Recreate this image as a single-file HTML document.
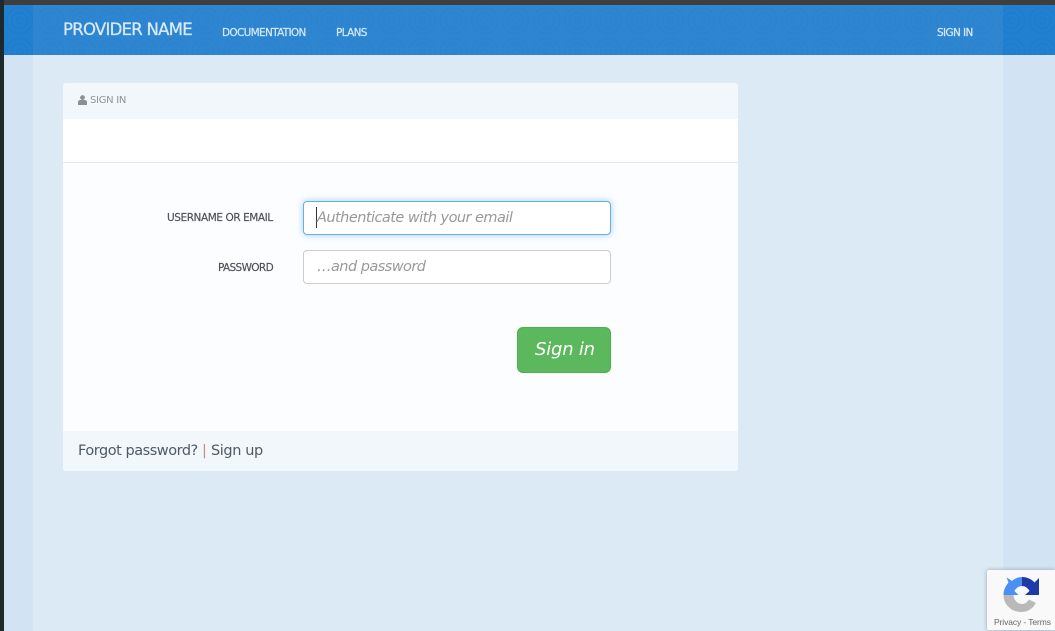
<!DOCTYPE html>
<html><head><meta charset="utf-8"><style>
html,body{margin:0;padding:0;width:1055px;height:631px;overflow:hidden;background:#d2e4f4;font-family:"DejaVu Sans","Liberation Sans",sans-serif}
div,span,svg{position:absolute;white-space:nowrap}
.t{line-height:1}
.n{font-size:10.5px;color:#d8e9f8;letter-spacing:-.68px;-webkit-text-stroke:.2px #d8e9f8;top:28px}
.l{font-size:10.5px;color:#4a4f55;letter-spacing:-.5px;-webkit-text-stroke:.15px #4a4f55}
.ph{font-size:14.5px;font-style:italic;color:#999;letter-spacing:-.54px}
.f{font-size:14.5px;color:#4f5a63;letter-spacing:-.47px;top:444px}
</style></head><body>
<div style="left:0;top:0;width:1055px;height:5px;background:#3e3e3e"></div>
<div style="left:0;top:0;width:4px;height:631px;background:#1c2a2c"></div>
<div style="left:4px;top:5px;width:1051px;height:50px;background:#2180cf"></div>
<div style="left:33px;top:5px;width:970px;height:50px;background:#2e86d1"></div>
<svg style="left:4px;top:5px" width="1051" height="50"><defs><pattern id="p" width="31" height="31" patternUnits="userSpaceOnUse"><g fill="none" stroke="#0a5aa8" stroke-opacity=".06" stroke-width="2"><circle cx="15.5" cy="15.5" r="3"/><circle cx="15.5" cy="15.5" r="8"/><circle cx="15.5" cy="15.5" r="13"/></g></pattern></defs><rect width="1051" height="50" fill="url(#p)"/></svg>
<div style="left:33px;top:55px;width:970px;height:576px;background:#dceaf6"></div>

<div class="t" style="left:63px;top:22px;font-size:16.5px;color:#d8e9f8;letter-spacing:-.73px;-webkit-text-stroke:.3px #d8e9f8">PROVIDER NAME</div>
<div class="t n" style="left:222px">DOCUMENTATION</div>
<div class="t n" style="left:336px">PLANS</div>
<div class="t n" style="left:937px;letter-spacing:-.62px">SIGN IN</div>

<div style="left:63px;top:83px;width:675px;height:388px;background:#fcfdff;border-radius:3px;overflow:hidden">
<div style="left:0;top:0;width:675px;height:36px;background:#f2f7fb"></div>
<div style="left:0;top:36px;width:675px;height:43px;background:#fff;border-bottom:1px solid #e6e8ea"></div>
<div style="left:0;top:348px;width:675px;height:40px;background:#f2f7fb"></div>
</div>
<svg style="left:78px;top:95px" width="9" height="10" viewBox="0 0 9 10"><circle cx="4.5" cy="2.6" r="2.4" fill="#8a8f96"/><path d="M0 10V7.2C0 5.8 1 5 2.2 5h4.6C8 5 9 5.8 9 7.2V10z" fill="#8a8f96"/></svg>
<div class="t" style="left:90px;top:96px;font-size:10px;color:#8f9499;letter-spacing:-.3px">SIGN IN</div>

<div class="t l" style="left:167px;top:213px;letter-spacing:-.43px">USERNAME OR EMAIL</div>
<div class="t l" style="left:218px;top:263px;letter-spacing:-.65px">PASSWORD</div>

<div style="left:303px;top:201px;width:306px;height:32px;background:#fff;border:1px solid #66afe9;border-radius:4px;box-shadow:0 0 7px rgba(102,175,233,.6)"></div>
<div style="left:316px;top:207px;width:1px;height:21px;background:#333"></div>
<div class="t ph" style="left:317px;top:211px">Authenticate with your email</div>
<div style="left:303px;top:250px;width:306px;height:32px;background:#fff;border:1px solid #ccc;border-radius:4px"></div>
<div class="t ph" style="left:317px;top:260px">…and password</div>

<div style="left:517px;top:327px;width:92px;height:44px;background:#5cb85c;border:1px solid #4cae4c;border-radius:6px"></div>
<div class="t" style="left:535px;top:341px;font-size:18px;font-style:italic;color:#fff;letter-spacing:-.22px">Sign in</div>

<div class="t f" style="left:78px">Forgot password?</div>
<div class="t f" style="left:202px;color:#c98a80;letter-spacing:0">|</div>
<div class="t f" style="left:211px;letter-spacing:-.4px">Sign up</div>

<div style="left:987px;top:570px;width:68px;height:60px;background:#f9f9f9;border-radius:2px 0 0 2px;box-shadow:0 0 4px rgba(0,0,0,.3)"></div>
<svg style="left:1003px;top:577px" width="37" height="36" viewBox="0 0 37 36">
<path d="M19 0V9C16 9 13 11 11.500 14L15.500 18H0.500C0.500 13 2.500 9 5.500 5.500L3.500 0.500L9 4C11.500 1.500 15 0 19 0Z" fill="#4a90f2"/>
<path d="M19 0C24 0 28.500 2 31.500 5.500L36 1V18H22L26.500 14C25 11 22 9 19 9Z" fill="#1c3aa9"/>
<path d="M0.500 18H10.500C11 23.500 14.500 27 19 27C22 27 24.500 25 26 22.500L33 26C29.500 32 24.500 35 18 35C8.500 35 0.500 27.500 0.500 18Z" fill="#b9b9b9"/>
</svg>
<div class="t" style="left:994px;top:618px;font-size:8.5px;color:#666;letter-spacing:-.1px;font-family:'Liberation Sans',sans-serif">Privacy - Terms</div>
</body></html>
